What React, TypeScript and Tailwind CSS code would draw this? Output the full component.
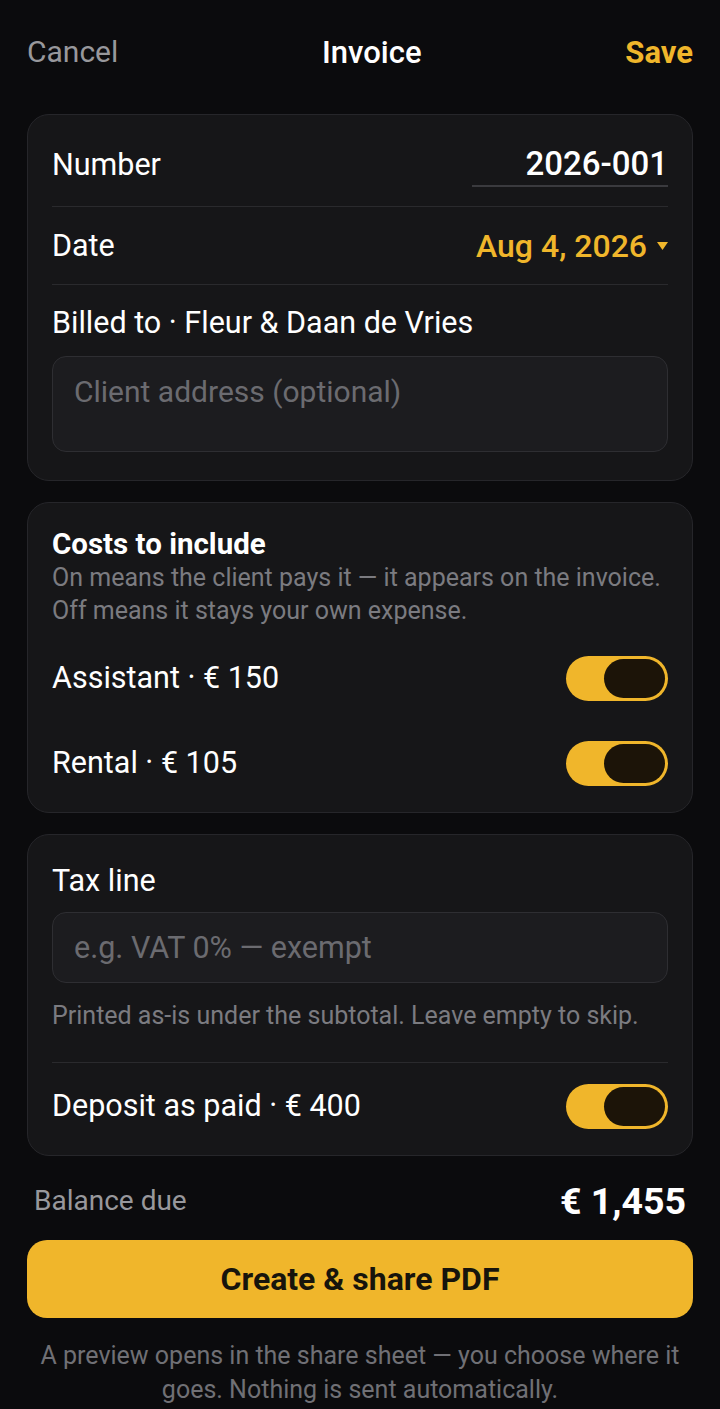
import React from 'react';

const font = { fontFamily: 'Roboto, "Noto Sans", sans-serif' };

const Toggle = () => (
  <div className="w-[102px] h-[45px] rounded-full bg-[#f0b62b] flex items-center justify-end p-[3px] shrink-0">
    <div className="w-[61px] h-[39px] rounded-full bg-[#1c1408]" />
  </div>
);

const Card: React.FC<{ className?: string; children: React.ReactNode }> = ({ className = '', children }) => (
  <div className={`rounded-[22px] border border-[#26262a] bg-[#161618] px-6 ${className}`}>{children}</div>
);

export default function App() {
  return (
    <div className="min-h-screen bg-[#0b0b0d] text-white px-[27px]" style={font}>
      {/* Header */}
      <div className="h-[104px] flex items-center justify-between text-[30px] leading-none">
        <span className="text-[#98989c]">Cancel</span>
        <span className="text-[31px] font-medium">Invoice</span>
        <span className="text-[31px] font-bold text-[#f0b62b]">Save</span>
      </div>

      {/* Number / Date / Billed to */}
      <Card className="mt-[10px] pt-2 pb-[28px]">
        <div className="h-[84px] flex items-center justify-between border-b border-[#2a2a2d]">
          <span className="text-[30.5px]">Number</span>
          <div className="w-[196px] border-b-2 border-[#3a3a3e] text-right text-[33px] font-medium leading-[38px] pb-[2px] mt-[2px]">
            2026-001
          </div>
        </div>
        <div className="h-[78px] flex items-center justify-between border-b border-[#2a2a2d]">
          <span className="text-[30.5px]">Date</span>
          <span className="flex items-center gap-[10px] text-[32px] font-medium text-[#f0b62b]">
            Aug 4, 2026
            <svg width="11" height="10" viewBox="0 0 11 10">
              <path d="M0 1h11L5.5 9z" fill="#f0b62b" />
            </svg>
          </span>
        </div>
        <div className="mt-[20px] text-[30.5px] leading-[36px]">Billed to · Fleur &amp; Daan de Vries</div>
        <div className="mt-[15px] h-[96px] rounded-[14px] border border-[#2e2e32] bg-[#1c1c1f] px-[21px] pt-[16px] text-[30px] leading-[38px] text-[#6b6b70]">
          Client address (optional)
        </div>
      </Card>

      {/* Costs */}
      <Card className="mt-[21px] pt-[24px] pb-[17px]">
        <div className="text-[29.5px] font-bold leading-[34px]">Costs to include</div>
        <div className="text-[25px] leading-[33px] text-[#7b7b80]">
          On means the client pays it — it appears on the invoice.
          <br />
          Off means it stays your own expense.
        </div>
        <div className="mt-[19px] h-16 flex items-center justify-between">
          <span className="text-[30.5px]">Assistant · € 150</span>
          <Toggle />
        </div>
        <div className="mt-[21px] h-16 flex items-center justify-between">
          <span className="text-[30.5px]">Rental · € 105</span>
          <Toggle />
        </div>
      </Card>

      {/* Tax line */}
      <Card className="mt-[21px] pt-[28px] pb-[17px]">
        <div className="text-[30.5px] leading-[36px]">Tax line</div>
        <div className="mt-[13px] h-[71px] rounded-[14px] border border-[#2e2e32] bg-[#1c1c1f] px-[21px] flex items-center text-[30.5px] text-[#6b6b70]">
          e.g. VAT 0% — exempt
        </div>
        <div className="mt-[18px] text-[25px] leading-[30px] text-[#7b7b80]">
          Printed as-is under the subtotal. Leave empty to skip.
        </div>
        <div className="mt-[31px] border-t border-[#2a2a2d]" />
        <div className="mt-[11px] h-16 flex items-center justify-between">
          <span className="text-[30.5px]">Deposit as paid · € 400</span>
          <Toggle />
        </div>
      </Card>

      {/* Balance */}
      <div className="h-[84px] pt-[6px] flex items-center justify-between px-[7px]">
        <span className="text-[28px] text-[#98989c]">Balance due</span>
        <span className="text-[37.5px] font-bold">€ 1,455</span>
      </div>

      <button className="w-full h-[78px] rounded-[20px] bg-[#f0b62b] text-[#17140c] text-[32px] font-bold">
        Create &amp; share PDF
      </button>

      <p className="mt-[21px] pb-4 text-center text-[25px] leading-[34px] text-[#707075]">
        A preview opens in the share sheet — you choose where it
        <br />
        goes. Nothing is sent automatically.
      </p>
    </div>
  );
}
